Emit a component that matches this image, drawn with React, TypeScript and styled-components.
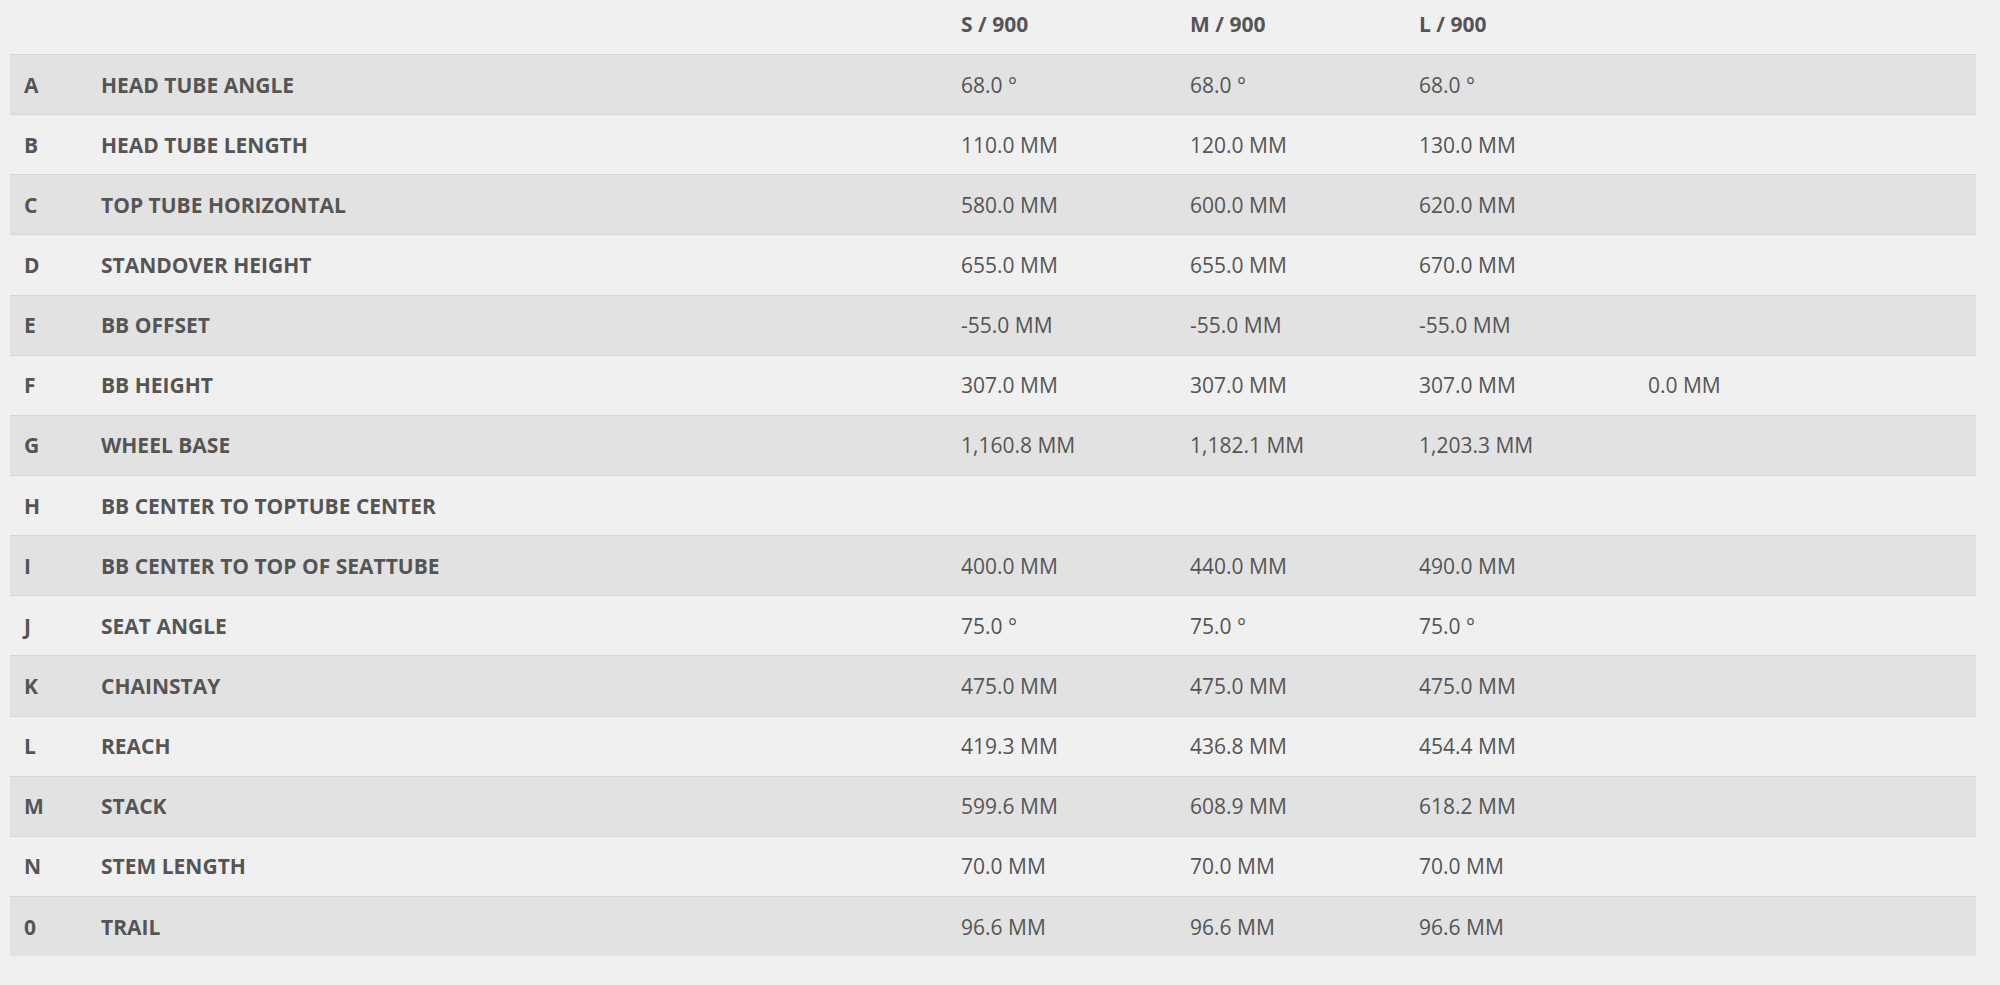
import React from "react";
import styled, { createGlobalStyle } from "styled-components";

const GlobalStyle = createGlobalStyle`
  html, body {
    margin: 0;
    padding: 0;
    background: #f0f0f0;
  }
  body {
    font-family: "Open Sans", "Noto Sans", sans-serif;
    color: #555555;
  }
`;

const Page = styled.div`
  padding: 0 24px 29px 10px;
  background: #f0f0f0;
  min-height: 985px;
  box-sizing: border-box;
`;

const Table = styled.div`
  display: grid;
  grid-template-columns: 77px 860px repeat(4, 229px) 1fr;
`;

const HeaderRow = styled.div`
  display: contents;
`;

const HeadCell = styled.div`
  height: 54px;
  box-sizing: border-box;
  padding: 0 14px 6px;
  display: flex;
  align-items: center;
  font-size: 21px;
  font-weight: 700;
  color: #555555;
  white-space: nowrap;
`;

const Row = styled.div<{ $striped: boolean }>`
  display: contents;
  & > div {
    background: ${(p) => (p.$striped ? "#e2e2e2" : "#f0f0f0")};
  }
`;

const Cell = styled.div<{ $bold?: boolean }>`
  height: 60.15px;
  box-sizing: border-box;
  border-top: 1px solid #d6d6d6;
  padding: 0 14px;
  display: flex;
  align-items: center;
  font-size: 21px;
  font-weight: ${(p) => (p.$bold ? 700 : 400)};
  color: #555555;
  white-space: nowrap;
`;

type Spec = { key: string; label: string; values: string[] };

const specs: Spec[] = [
  { key: "A", label: "HEAD TUBE ANGLE", values: ["68.0 °", "68.0 °", "68.0 °", ""] },
  { key: "B", label: "HEAD TUBE LENGTH", values: ["110.0 MM", "120.0 MM", "130.0 MM", ""] },
  { key: "C", label: "TOP TUBE HORIZONTAL", values: ["580.0 MM", "600.0 MM", "620.0 MM", ""] },
  { key: "D", label: "STANDOVER HEIGHT", values: ["655.0 MM", "655.0 MM", "670.0 MM", ""] },
  { key: "E", label: "BB OFFSET", values: ["-55.0 MM", "-55.0 MM", "-55.0 MM", ""] },
  { key: "F", label: "BB HEIGHT", values: ["307.0 MM", "307.0 MM", "307.0 MM", "0.0 MM"] },
  { key: "G", label: "WHEEL BASE", values: ["1,160.8 MM", "1,182.1 MM", "1,203.3 MM", ""] },
  { key: "H", label: "BB CENTER TO TOPTUBE CENTER", values: ["", "", "", ""] },
  { key: "I", label: "BB CENTER TO TOP OF SEATTUBE", values: ["400.0 MM", "440.0 MM", "490.0 MM", ""] },
  { key: "J", label: "SEAT ANGLE", values: ["75.0 °", "75.0 °", "75.0 °", ""] },
  { key: "K", label: "CHAINSTAY", values: ["475.0 MM", "475.0 MM", "475.0 MM", ""] },
  { key: "L", label: "REACH", values: ["419.3 MM", "436.8 MM", "454.4 MM", ""] },
  { key: "M", label: "STACK", values: ["599.6 MM", "608.9 MM", "618.2 MM", ""] },
  { key: "N", label: "STEM LENGTH", values: ["70.0 MM", "70.0 MM", "70.0 MM", ""] },
  { key: "0", label: "TRAIL", values: ["96.6 MM", "96.6 MM", "96.6 MM", ""] },
];

const sizes = ["S / 900", "M / 900", "L / 900", "", ""];

export default function App() {
  return (
    <>
      <GlobalStyle />
      <Page>
        <Table>
          <HeaderRow>
            <HeadCell />
            <HeadCell />
            {sizes.map((s, i) => (
              <HeadCell key={i}>{s}</HeadCell>
            ))}
          </HeaderRow>
          {specs.map((row, idx) => (
            <Row key={row.key} $striped={idx % 2 === 0}>
              <Cell $bold>{row.key}</Cell>
              <Cell $bold>{row.label}</Cell>
              {row.values.map((v, i) => (
                <Cell key={i}>{v}</Cell>
              ))}
              <Cell />
            </Row>
          ))}
        </Table>
      </Page>
    </>
  );
}
